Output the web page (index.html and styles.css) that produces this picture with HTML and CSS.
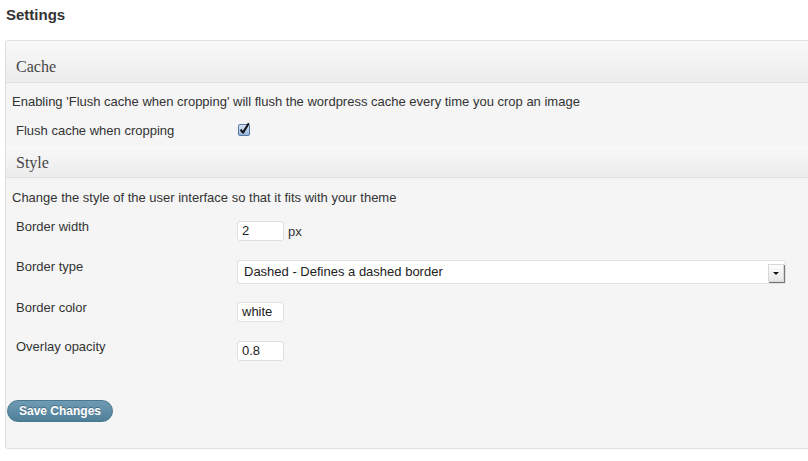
FILE: index.html
```html
<!DOCTYPE html>
<html>
<head>
<meta charset="utf-8">
<link rel="stylesheet" href="styles.css">
</head>
<body>
<div class="wrap">
  <h2 class="title">Settings</h2>
  <form class="panel">
    <h3 class="section-head cache-head">Cache</h3>
    <p class="desc desc-cache">Enabling 'Flush cache when cropping' will flush the wordpress cache every time you crop an image</p>
    <div class="row row-check">
      <label class="lbl">Flush cache when cropping</label>
      <span class="check">
        <svg width="13" height="16" viewBox="0 0 13 16">
          <defs>
            <linearGradient id="cb" x1="0" y1="0" x2="0" y2="1">
              <stop offset="0" stop-color="#dbe8f6"/>
              <stop offset="1" stop-color="#8fb3da"/>
            </linearGradient>
          </defs>
          <rect x="0.5" y="3.5" width="11" height="11" rx="1.5" fill="url(#cb)" stroke="#5679a3"/>
          <path d="M2.6 8.6 L5 11.6 L10.8 2.2" fill="none" stroke="#111" stroke-width="2" stroke-linejoin="round"/>
        </svg>
      </span>
    </div>
    <h3 class="section-head style-head">Style</h3>
    <p class="desc desc-style">Change the style of the user interface so that it fits with your theme</p>
    <div class="rows">
      <div class="row">
        <label class="lbl">Border width</label>
        <div class="ctl"><span class="input">2</span><span class="unit">px</span></div>
      </div>
      <div class="row">
        <label class="lbl">Border type</label>
        <div class="ctl ctl-select"><span class="select">Dashed - Defines a dashed border<span class="arrow"></span></span></div>
      </div>
      <div class="row">
        <label class="lbl">Border color</label>
        <div class="ctl"><span class="input">white</span></div>
      </div>
      <div class="row">
        <label class="lbl">Overlay opacity</label>
        <div class="ctl"><span class="input">0.8</span></div>
      </div>
    </div>
    <div class="actions"><span class="button">Save Changes</span></div>
  </form>
</div>
</body>
</html>
```
FILE: styles.css
```css
html, body {
  margin: 0;
  padding: 0;
  background: #fff;
  overflow: hidden;
}
body {
  font-family: "Liberation Sans", Arial, sans-serif;
  font-size: 13px;
  color: #333;
}
.wrap {
  padding: 5px 0 0 5px;
}
.title {
  margin: 0 0 0 1px;
  font-size: 15px;
  line-height: 20px;
  font-weight: bold;
  color: #333;
  height: 35px;
}
.panel {
  display: block;
  margin: 0 -30px 0 0;
  border: 1px solid #dfdfdf;
  border-radius: 3px;
  background: #f5f5f5;
  height: 409px;
  box-sizing: border-box;
}
.section-head {
  margin: 0;
  font-family: "Liberation Serif", Georgia, serif;
  font-weight: normal;
  font-size: 16px;
  line-height: 20px;
  color: #464646;
  padding-left: 10px;
  background: linear-gradient(#f9f9f9, #ececec);
  border-bottom: 1px solid #dfdfdf;
}
.cache-head {
  padding-top: 16px;
  padding-bottom: 5px;
  border-radius: 3px 0 0 0;
}
.style-head {
  padding-top: 8px;
  padding-bottom: 4px;
}
.desc {
  margin: 0;
  padding-left: 6px;
  line-height: 16px;
  color: #333;
}
.desc-cache {
  padding-top: 11px;
  height: 22px;
}
.desc-style {
  padding-top: 12px;
  height: 29px;
}
.row {
  display: flex;
  align-items: flex-start;
}
.row-check {
  height: 29px;
  line-height: 16px;
}
.row-check .lbl {
  padding-top: 7px;
}
.check {
  display: block;
}
.check svg {
  display: block;
  margin-top: 5px;
  margin-left: 1px;
}
.lbl {
  box-sizing: border-box;
  width: 231px;
  padding-left: 10px;
  line-height: 16px;
  flex: none;
}
.rows {
  display: grid;
  grid-template-rows: 40px 41px 39px 40px;
}
.ctl {
  display: flex;
  align-items: center;
  margin-top: 2px;
}
.ctl-select {
  margin-top: 1px;
  width: 549px;
}
.input {
  display: block;
  box-sizing: border-box;
  width: 47px;
  height: 20px;
  line-height: 18px;
  padding-left: 4px;
  background: #fff;
  border: 1px solid #dfdfdf;
  border-radius: 3px;
  color: #222;
}
.unit {
  margin-left: 4px;
  line-height: 18px;
  padding-top: 2px;
}
.select {
  position: relative;
  display: block;
  box-sizing: border-box;
  width: 549px;
  height: 24px;
  line-height: 20px;
  padding: 1px 0 0 6px;
  background: #fff;
  border: 1px solid #dfdfdf;
  border-radius: 3px;
  color: #222;
}
.arrow {
  position: absolute;
  right: 1px;
  top: 3px;
  width: 14px;
  height: 16px;
  background: linear-gradient(#fdfdfd, #e8e8e8);
  border: 1px solid #d8d8d8;
  box-shadow: 1px 1px 0 #777;
}
.arrow::after {
  content: "";
  position: absolute;
  left: 4px;
  top: 7px;
  border-left: 3px solid transparent;
  border-right: 3px solid transparent;
  border-top: 3px solid #111;
}
.actions {
  padding: 21px 0 0 1px;
}
.button {
  display: inline-block;
  box-sizing: border-box;
  height: 22px;
  width: 106px;
  text-align: center;
  border-radius: 11px;
  background: linear-gradient(#6e9bb4, #4e7f99);
  border: 1px solid #4b7891;
  color: #fff;
  font-weight: bold;
  font-size: 12px;
  line-height: 20px;
  text-shadow: 0 -1px 0 rgba(0,0,0,0.3);
}
```
